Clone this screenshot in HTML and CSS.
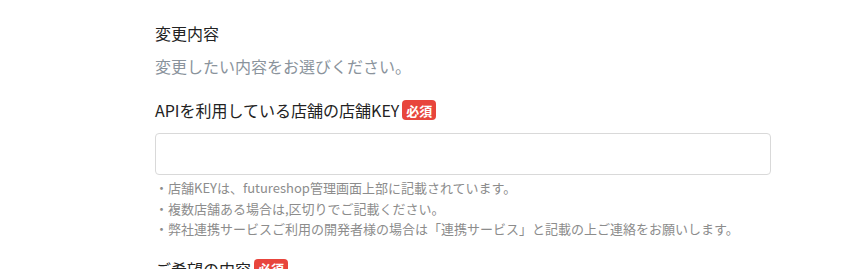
FILE: index.html
```html
<!DOCTYPE html>
<html lang="ja">
<head>
<meta charset="utf-8">
<link rel="stylesheet" href="styles.css">
</head>
<body>
<main class="form">
  <section class="group">
    <h2 class="title">変更内容</h2>
    <p class="lead">変更したい内容をお選びください。</p>
  </section>
  <section class="field">
    <label class="label">APIを利用している店舗の店舗KEY<span class="badge">必須</span></label>
    <input class="input" type="text">
    <ul class="help">
      <li>・店舗KEYは、futureshop管理画面上部に記載されています。</li>
      <li>・複数店舗ある場合は,区切りでご記載ください。</li>
      <li>・弊社連携サービスご利用の開発者様の場合は「連携サービス」と記載の上ご連絡をお願いします。</li>
    </ul>
  </section>
  <section class="field next">
    <label class="label">ご希望の内容<span class="badge">必須</span></label>
  </section>
</main>
</body>
</html>
```

FILE: styles.css
```css
html, body {
  margin: 0;
  padding: 0;
  background: #fff;
}
body {
  font-family: "Noto Sans CJK JP", "Noto Sans", sans-serif;
  color: #222;
  overflow: hidden;
}
.form {
  width: 616px;
  padding: 21px 0 0 155px;
  display: flex;
  flex-direction: column;
}
.group {
  display: flex;
  flex-direction: column;
}
.title {
  margin: 0;
  font-size: 16px;
  font-weight: 400;
  line-height: 24px;
}
.lead {
  margin: 9px 0 0;
  font-size: 16px;
  line-height: 24px;
  color: #8a939c;
}
.field {
  display: flex;
  flex-direction: column;
  margin-top: 20px;
}
.label {
  display: flex;
  align-items: center;
  font-size: 16px;
  line-height: 24px;
  color: #222;
}
.badge {
  display: inline-flex;
  align-items: center;
  justify-content: center;
  margin-left: 3px;
  width: 34px;
  height: 20px;
  border-radius: 4px;
  background: #e8453c;
  color: #fff;
  font-size: 13px;
  font-weight: 700;
  line-height: 1;
}
.input {
  box-sizing: border-box;
  margin: 11px 0 0;
  width: 616px;
  height: 42px;
  border: 1px solid #d9d9d9;
  border-radius: 4px;
  background: #fff;
  font: inherit;
  outline: none;
}
.help {
  list-style: none;
  margin: 3px 0 0;
  padding: 0;
  font-size: 13px;
  line-height: 20.5px;
  color: #8c8c8c;
}
.next {
  margin-top: 17px;
}
```
